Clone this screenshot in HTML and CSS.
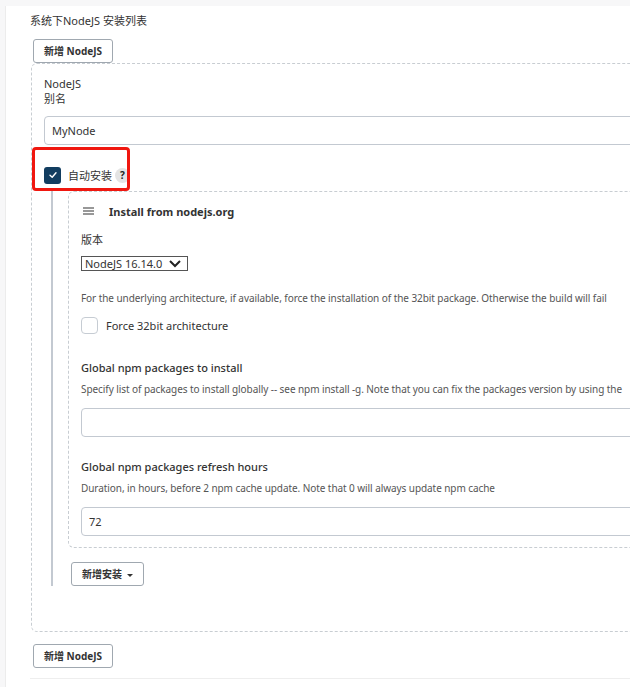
FILE: index.html
```html
<!DOCTYPE html>
<html>
<head>
<meta charset="utf-8">
<link rel="stylesheet" href="styles.css">
</head>
<body>
<div class="topbar"></div>
<div class="layout">
  <div class="side"></div>
  <main class="content">
    <div class="title">系统下NodeJS 安装列表</div>
    <button class="btn top-btn">新增 NodeJS</button>
    <div class="repeated">
      <div class="lbl">NodeJS</div>
      <div class="lbl">别名</div>
      <div class="input">MyNode</div>
      <div class="auto-row">
        <span class="check on"><svg width="10" height="10" viewBox="0 0 10 10"><path d="M2 5.2 L4.2 7.2 L8 2.8" fill="none" stroke="#fff" stroke-width="1.4" stroke-linecap="round" stroke-linejoin="round"/></svg></span>
        <span class="auto-label">自动安装</span>
        <span class="help">?</span>
        <span class="highlight"></span>
      </div>
      <div class="installers">
        <div class="installer">
          <div class="inst-head">
            <svg class="handle" width="11" height="8" viewBox="0 0 11 8"><path d="M0 1h11M0 4h11M0 7h11" stroke="#333" stroke-width="1.2"/></svg>
            <span class="inst-title">Install from nodejs.org</span>
          </div>
          <div class="lbl2">版本</div>
          <div class="select">NodeJS 16.14.0<svg width="14" height="9" viewBox="0 0 14 9"><path d="M2 2 L7 7 L12 2" fill="none" stroke="#222" stroke-width="2"/></svg></div>
          <div class="desc d1">For the underlying architecture, if available, force the installation of the 32bit package. Otherwise the build will fail</div>
          <div class="cb-row"><span class="check off"></span><span class="cb-label">Force 32bit architecture</span></div>
          <div class="field-title f1">Global npm packages to install</div>
          <div class="desc">Specify list of packages to install globally -- see npm install -g. Note that you can fix the packages version by using the</div>
          <div class="input wide"></div>
          <div class="field-title f2">Global npm packages refresh hours</div>
          <div class="desc">Duration, in hours, before 2 npm cache update. Note that 0 will always update npm cache</div>
          <div class="input wide">72</div>
        </div>
        <button class="btn add-inst">新增安装 <span class="caret"></span></button>
      </div>
    </div>
    <button class="btn bottom-btn">新增 NodeJS</button>
    <div class="rule"></div>
  </main>
</div>
</body>
</html>
```
FILE: styles.css
```css
html, body {
  margin: 0;
  padding: 0;
  overflow: hidden;
  background: #fff;
  font-family: "Noto Sans", "Noto Sans CJK SC", sans-serif;
  font-size: 11px;
  color: #333;
}
.topbar {
  height: 6px;
  background: #f7f7f8;
}
.layout {
  display: flex;
}
.side {
  width: 5px;
  flex: none;
  background: #f7f7f8;
  border-right: 1px solid #ececec;
  min-height: 700px;
}
.content {
  padding-left: 24px;
  width: 700px;
  flex: none;
}
.title {
  font-size: 11px;
  line-height: 16px;
  margin-top: 7px;
  color: #333;
}
.btn {
  display: block;
  font-family: inherit;
  font-size: 10px;
  font-weight: 700;
  color: #333;
  background: #fff;
  border: 1px solid #a0a8b0;
  border-radius: 3px;
  height: 24px;
  padding: 0 10px;
  line-height: 20px;
  white-space: nowrap;
}
.top-btn {
  margin: 10px 0 0 3px;
}
.repeated {
  margin-left: 1px;
  width: 680px;
  border: 1px dashed #c8cdd2;
  border-radius: 6px;
  padding: 12px 12px 45px 12px;
  box-sizing: border-box;
}
.lbl {
  font-size: 11px;
  line-height: 15px;
  color: #333;
}
.input {
  margin-top: 10px;
  height: 29px;
  border: 1px solid #c3c9d1;
  border-radius: 4px;
  box-sizing: border-box;
  padding-left: 7px;
  line-height: 27px;
  font-size: 11px;
  color: #333;
}
.auto-row {
  position: relative;
  display: flex;
  align-items: center;
  height: 18px;
  margin-top: 21px;
}
.check {
  width: 17px;
  height: 17px;
  border-radius: 3px;
  box-sizing: border-box;
  display: inline-flex;
  align-items: center;
  justify-content: center;
  flex: none;
}
.check.on {
  background: #123d60;
}
.check.off {
  border: 1.5px solid #c6ccd3;
  border-radius: 4px;
}
.auto-label {
  margin-left: 7px;
  font-size: 11px;
}
.help {
  margin-left: 3px;
  width: 15px;
  height: 15px;
  border-radius: 50%;
  background: #e4e4e4;
  color: #222;
  font-size: 10px;
  font-weight: 700;
  display: inline-flex;
  align-items: center;
  justify-content: center;
}
.highlight {
  position: absolute;
  left: -12px;
  top: -19px;
  width: 98px;
  height: 44px;
  border: 3px solid #f0170f;
  border-radius: 4px;
  box-sizing: border-box;
}
.installers {
  margin-left: 7px;
  border-left: 2px solid #c3c9d1;
  padding-left: 15px;
  margin-top: 7px;
}
.installer {
  border: 1px dashed #c8cdd2;
  border-radius: 6px;
  padding: 12px 12px 11px 12px;
}
.inst-head {
  display: flex;
  align-items: center;
  height: 14px;
}
.handle {
  margin-left: 2px;
  margin-right: 15px;
}
.inst-title {
  font-weight: 700;
  font-size: 11px;
}
.lbl2 {
  margin-top: 14px;
  line-height: 15px;
}
.select {
  margin-top: 9px;
  width: 107px;
  height: 15px;
  border: 1px solid #555;
  box-sizing: border-box;
  display: flex;
  align-items: center;
  justify-content: space-between;
  padding: 0 5px 0 3px;
  font-size: 11px;
  color: #333;
}
.desc {
  font-size: 10px;
  color: #555;
  line-height: 15px;
  white-space: nowrap;
  letter-spacing: -0.07px;
}
.desc.d1 {
  margin-top: 20px;
}
.cb-row {
  display: flex;
  align-items: center;
  margin-top: 11px;
}
.cb-label {
  margin-left: 8px;
  font-size: 11px;
}
.field-title {
  font-size: 11px;
  font-weight: 500;
  line-height: 15px;
  margin-bottom: 7px;
}
.f1 { margin-top: 26px; }
.f2 { margin-top: 22px; }
.input.wide {
  margin-top: 11px;
  margin-right: -20px;
}
.add-inst {
  margin: 14px 0 0 3px;
}
.caret {
  display: inline-block;
  width: 0;
  height: 0;
  border-left: 3px solid transparent;
  border-right: 3px solid transparent;
  border-top: 3px solid #333;
  vertical-align: middle;
  margin-left: 2px;
}
.bottom-btn {
  margin: 12px 0 0 3px;
}
.rule {
  margin-top: 10px;
  height: 1px;
  background: #eee;
}
```
